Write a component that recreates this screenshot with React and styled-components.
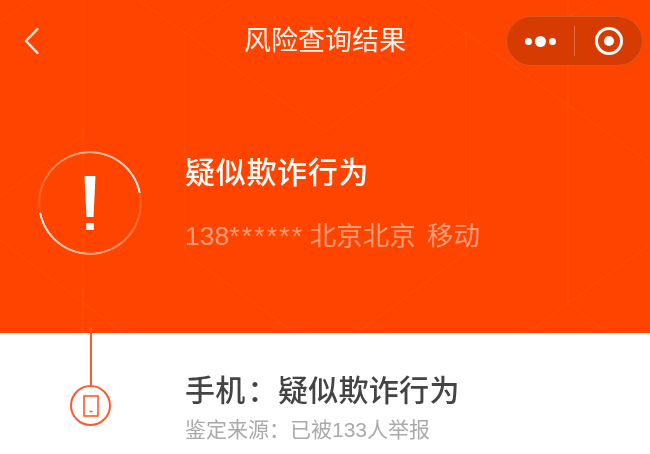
import React from 'react';
import styled, { createGlobalStyle } from 'styled-components';

const Global = createGlobalStyle`
  html, body { margin: 0; padding: 0; background: #fff; }
  body { font-family: "Liberation Sans", "Noto Sans CJK SC", sans-serif; }
`;
const Page = styled.div`
  width: 650px; height: 454px; overflow: hidden; display: flex; flex-direction: column; background: #fff;
  filter: blur(0.35px);
`;
const Hero = styled.header`
  position: relative; height: 333px; flex: none; background: #ff4400; color: #fff;
`;
const Pattern = styled.svg`
  position: absolute; inset: 0; width: 100%; height: 100%;
  stroke: rgba(255, 255, 255, 0.06); stroke-width: 1; fill: none;
`;
const Nav = styled.nav`
  position: relative; display: grid; grid-template-columns: 1fr auto 1fr; align-items: center;
  height: 50px; padding: 16px 7px 0 7px;
`;
const Back = styled.svg`
  margin-left: 17px; width: 15px; height: 28px; fill: none; stroke: #fff; stroke-opacity: .9; stroke-width: 2.4; stroke-linecap: round; stroke-linejoin: round;
`;
const Title = styled.h1`
  margin: 0; font-size: 27px; font-weight: 400; line-height: 50px; color: rgba(255,255,255,.95); white-space: nowrap;
`;
const Capsule = styled.div`
  justify-self: end; box-sizing: border-box; width: 137px; height: 50px; border-radius: 25px;
  display: flex; align-items: center; background: #d63c02; border: 1px solid rgba(255,255,255,.14);
`;
const CapsuleCell = styled.div`
  flex: 1; display: flex; align-items: center; justify-content: center; gap: 3px;
`;
const Divider = styled.div`
  width: 1px; height: 30px; background: rgba(255,255,255,.25);
`;
const Dot = styled.span`
  width: ${p => p.$size}px; height: ${p => p.$size}px; border-radius: 50%; background: #fff;
`;
const Record = styled.span`
  box-sizing: border-box; width: 28px; height: 28px; border-radius: 50%; border: 3px solid #fff;
  display: flex; align-items: center; justify-content: center;
  &::after { content: ""; width: 10px; height: 10px; border-radius: 50%; background: #fff; }
`;
const Summary = styled.section`
  position: relative; display: flex; align-items: center; gap: 43px; padding: 85px 0 0 38px;
`;
const Ring = styled.div`
  position: relative; flex: none; width: 104px; height: 104px; border-radius: 50%;
  display: flex; align-items: center; justify-content: center;
  &::before {
    content: ""; position: absolute; inset: 0; border-radius: 50%;
    background: conic-gradient(from 79deg, rgba(255,255,255,.08) 0deg, rgba(255,255,255,.9) 180deg, rgba(255,255,255,.08) 180deg, rgba(255,255,255,.9) 360deg);
    -webkit-mask: radial-gradient(closest-side, transparent calc(100% - 2.6px), #000 calc(100% - 2px));
    mask: radial-gradient(closest-side, transparent calc(100% - 2.6px), #000 calc(100% - 2px));
  }
`;
const Bang = styled.svg`
  width: 12px; height: 54px; fill: #fff;
`;
const SummaryText = styled.div`
  display: flex; flex-direction: column; gap: 25px;
`;
const Verdict = styled.div`
  font-size: 30px; font-weight: 500; line-height: 40px; letter-spacing: .7px; color: #fff; white-space: nowrap;
`;
const Carrier = styled.div`
  font-size: 26.5px; line-height: 36px; word-spacing: 4px; color: rgba(255,255,255,.48); white-space: nowrap;
`;
const Mask = styled.span`
  letter-spacing: 2.2px; margin-right: -6px;
`;
const Entry = styled.section`
  display: flex; flex: 1; padding-left: 70px; gap: 74px; min-height: 0;
`;
const Rail = styled.div`
  flex: none; width: 41px; display: flex; flex-direction: column; align-items: center;
`;
const RailLine = styled.div`
  width: 2px; height: 57px; margin-top: -5px; background: #ff5a2e; position: relative;
`;
const RailBadge = styled.div`
  box-sizing: border-box; width: 41px; height: 41px; border-radius: 50%; border: 2px solid #ff5a2e;
  display: flex; align-items: center; justify-content: center;
`;
const Phone = styled.svg`
  width: 16px; height: 22px; fill: none; stroke: #ff5a2e; stroke-width: 1.6;
`;
const EntryText = styled.div`
  display: flex; flex-direction: column; padding-top: 39px; gap: 5px;
`;
const EntryTitle = styled.div`
  font-size: 30px; font-weight: 500; line-height: 38px; letter-spacing: .3px; color: #444; white-space: nowrap;
`;
const EntrySource = styled.div`
  font-size: 21px; line-height: 30px; color: #aaa; white-space: nowrap;
`;
const Colon = styled.span`
  margin-left: ${p => p.$shift || 0}px;
`;

const lines = [
  'M0 22L32 0', 'M138 0L185 33L233 0', 'M185 33V253L295 333', 'M185 33L325 131', 'M466 33L325 131',
  'M83 0V333', 'M83 135L0 197', 'M0 240L123 333', 'M418 0L466 33L650 163',
  'M466 33V253L357 333', 'M568 0V303L608 333', 'M598 0L568 17', 'M650 245L568 303L528 333',
];

export default function App() {
  return (
    <Page>
      <Global />
      <Hero>
        <Pattern viewBox="0 0 650 333">
          {lines.map(d => <path key={d} d={d} />)}
        </Pattern>
        <Nav>
          <Back viewBox="0 0 15 28"><path d="M13.5 2L2 14l11.5 12" /></Back>
          <Title>风险查询结果</Title>
          <Capsule>
            <CapsuleCell><Dot $size={7} /><Dot $size={11} /><Dot $size={7} /></CapsuleCell>
            <Divider />
            <CapsuleCell><Record /></CapsuleCell>
          </Capsule>
        </Nav>
        <Summary>
          <Ring>
            <Bang viewBox="0 0 12 54"><path d="M0.5 0H11.5L9.5 41H2.5Z" /><rect x="2.2" y="47" width="7.6" height="7" /></Bang>
          </Ring>
          <SummaryText>
            <Verdict>疑似欺诈行为</Verdict>
            <Carrier>138<Mask>******</Mask> 北京北京 移动</Carrier>
          </SummaryText>
        </Summary>
      </Hero>
      <Entry>
        <Rail>
          <RailLine />
          <RailBadge>
            <Phone viewBox="0 0 16 22"><rect x="1" y="1" width="14" height="20" /><path d="M6.5 16.5h3" /></Phone>
          </RailBadge>
        </Rail>
        <EntryText>
          <EntryTitle>手机<Colon $shift={2}>：</Colon>疑似欺诈行为</EntryTitle>
          <EntrySource>鉴定来源<Colon>：</Colon>已被133人举报</EntrySource>
        </EntryText>
      </Entry>
    </Page>
  );
}
